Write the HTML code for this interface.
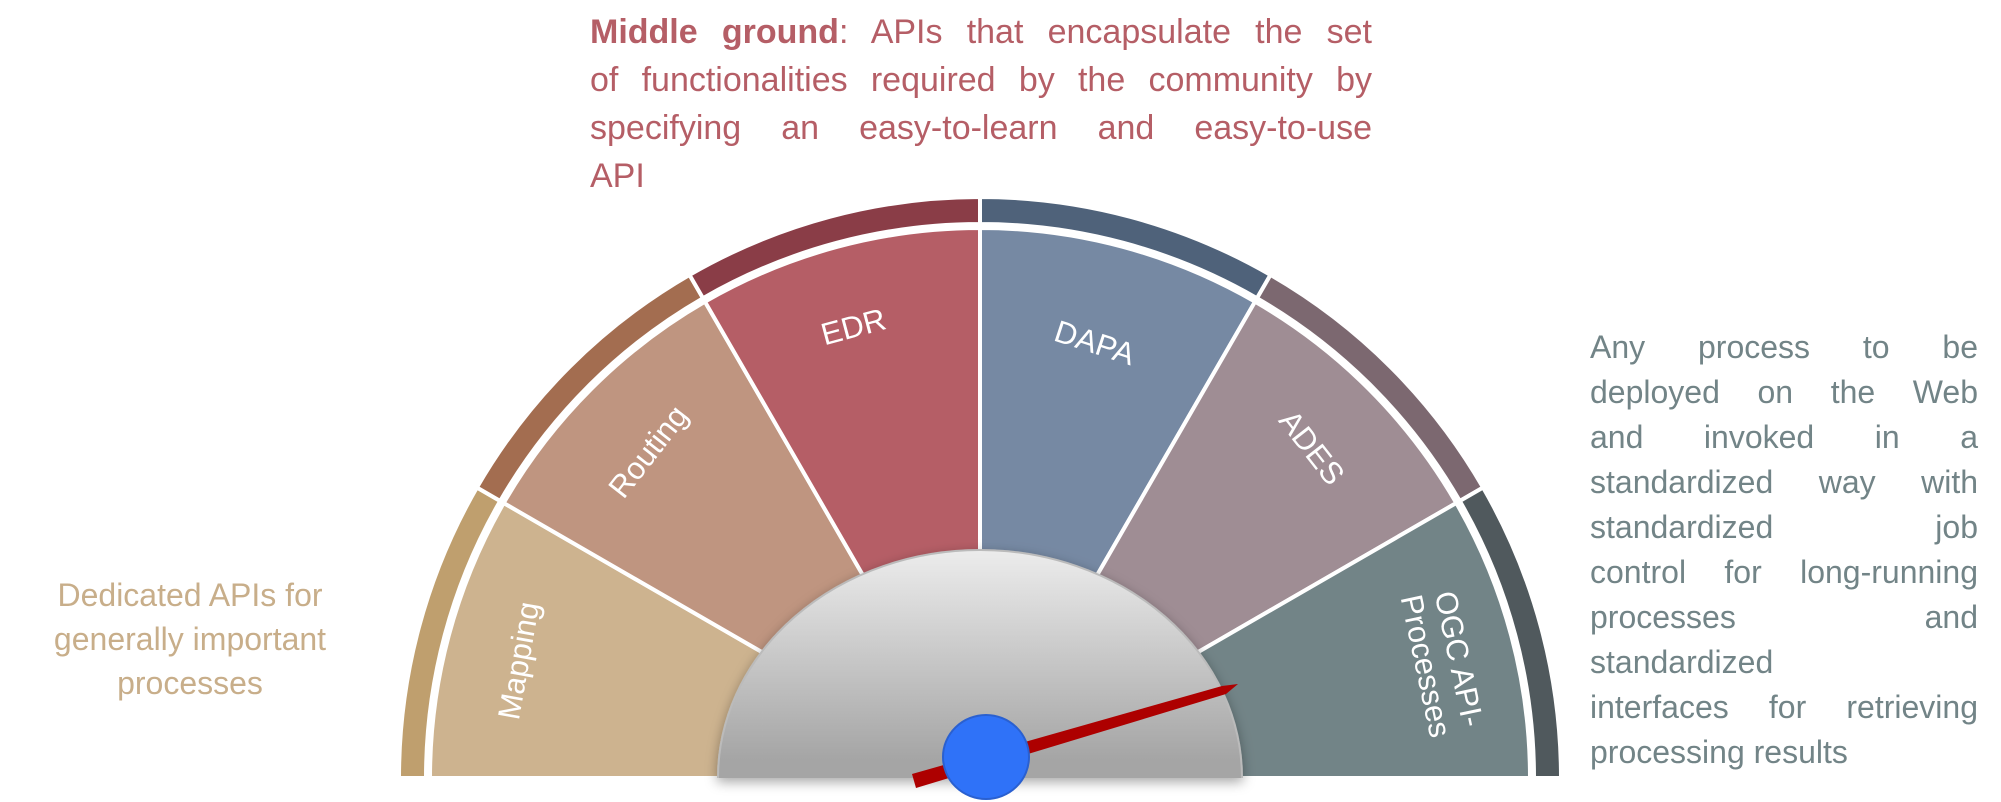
<!DOCTYPE html>
<html><head><meta charset="utf-8"><style>
html,body{margin:0;padding:0;background:#fff;}
body{width:2001px;height:802px;position:relative;overflow:hidden;font-family:"Liberation Sans",Arial,sans-serif;}
.blk{position:absolute;}
.blk div{white-space:nowrap;}
.j{text-align:justify;text-align-last:justify;}
.l{text-align:left;}
#top{left:590px;top:8px;width:782px;font-size:34px;line-height:48px;color:#b55e66;}
#right{left:1590px;top:325px;width:388px;font-size:32px;line-height:45px;color:#728487;}
#left{left:20px;top:573px;width:340px;font-size:32px;line-height:44px;color:#c8ae8a;text-align:center;}
svg{position:absolute;left:0;top:0;}
</style></head><body>
<svg width="2001" height="802" viewBox="0 0 2001 802">
<defs>
<linearGradient id="hub" gradientUnits="userSpaceOnUse" x1="0" y1="550" x2="0" y2="760">
<stop offset="0" stop-color="#ececec"/><stop offset="1" stop-color="#a5a5a5"/>
</linearGradient>
<filter id="sh" x="-20%" y="-20%" width="140%" height="140%"><feDropShadow dx="0" dy="4" stdDeviation="6" flood-color="#000" flood-opacity="0.35"/></filter>
<clipPath id="up"><rect x="0" y="0" width="2001" height="778"/></clipPath>
</defs>
<g stroke="#fff" stroke-width="4">
<path d="M399,778 A581,581 0 0 1 476.9,487.5 L500.2,501 A554,554 0 0 0 426,778 Z" fill="#bf9f6e"/>
<path d="M476.9,487.5 A581,581 0 0 1 689.5,274.9 L703,298.2 A554,554 0 0 0 500.2,501 Z" fill="#a36d50"/>
<path d="M689.5,274.9 A581,581 0 0 1 980,197 L980,224 A554,554 0 0 0 703,298.2 Z" fill="#8a3d47"/>
<path d="M980,197 A581,581 0 0 1 1270.5,274.9 L1257,298.2 A554,554 0 0 0 980,224 Z" fill="#4f627a"/>
<path d="M1270.5,274.9 A581,581 0 0 1 1483.1,487.5 L1459.8,501 A554,554 0 0 0 1257,298.2 Z" fill="#7c6870"/>
<path d="M1483.1,487.5 A581,581 0 0 1 1561,778 L1534,778 A554,554 0 0 0 1459.8,501 Z" fill="#50595d"/>
<path d="M980,778 L430,778 A550,550 0 0 1 503.7,503 Z" fill="#cdb38f"/>
<path d="M980,778 L503.7,503 A550,550 0 0 1 705,301.7 Z" fill="#bf9580"/>
<path d="M980,778 L705,301.7 A550,550 0 0 1 980,228 Z" fill="#b55e66"/>
<path d="M980,778 L980,228 A550,550 0 0 1 1255,301.7 Z" fill="#7689a3"/>
<path d="M980,778 L1255,301.7 A550,550 0 0 1 1456.3,503 Z" fill="#9f8d94"/>
<path d="M980,778 L1456.3,503 A550,550 0 0 1 1530,778 Z" fill="#728487"/>
</g>
<g fill="#fff" font-family="Liberation Sans, Arial, sans-serif" font-size="31" text-anchor="middle" dominant-baseline="middle">
<text transform="translate(854,329) rotate(-15)">EDR</text>
<text transform="translate(1094,345) rotate(18)">DAPA</text>
<text transform="translate(650,453) rotate(-52)">Routing</text>
<text transform="translate(1310,449) rotate(52)">ADES</text>
<text transform="translate(521,661) rotate(-80)">Mapping</text>
<text transform="translate(1440,663) rotate(78)"><tspan x="0" y="-17">OGC API-</tspan><tspan x="0" y="17">Processes</tspan></text>
</g>
<g filter="url(#sh)">
<ellipse cx="980" cy="778" rx="262" ry="228" fill="url(#hub)" clip-path="url(#up)" stroke="#bbb" stroke-width="2"/>
</g>
<polygon points="912,774 1222,686 1238,684 1226,694 916,788" fill="#ad0000"/>
<ellipse cx="986" cy="757" rx="43" ry="42" fill="#2f72f8" stroke="#2a60d0" stroke-width="2"/>
</svg>
<div class="blk" id="top">
<div class="j"><b>Middle ground</b>: APIs that encapsulate the set</div>
<div class="j">of functionalities required by the community by</div>
<div class="j">specifying an easy-to-learn and easy-to-use</div>
<div class="l">API</div>
</div>
<div class="blk" id="right">
<div class="j">Any process to be</div>
<div class="j">deployed on the Web</div>
<div class="j">and invoked in a</div>
<div class="j">standardized way with</div>
<div class="j">standardized job</div>
<div class="j">control for long-running</div>
<div class="j">processes and</div>
<div class="l">standardized</div>
<div class="j">interfaces for retrieving</div>
<div class="l">processing results</div>
</div>
<div class="blk" id="left">
<div>Dedicated APIs for</div>
<div>generally important</div>
<div>processes</div>
</div>
</body></html>
